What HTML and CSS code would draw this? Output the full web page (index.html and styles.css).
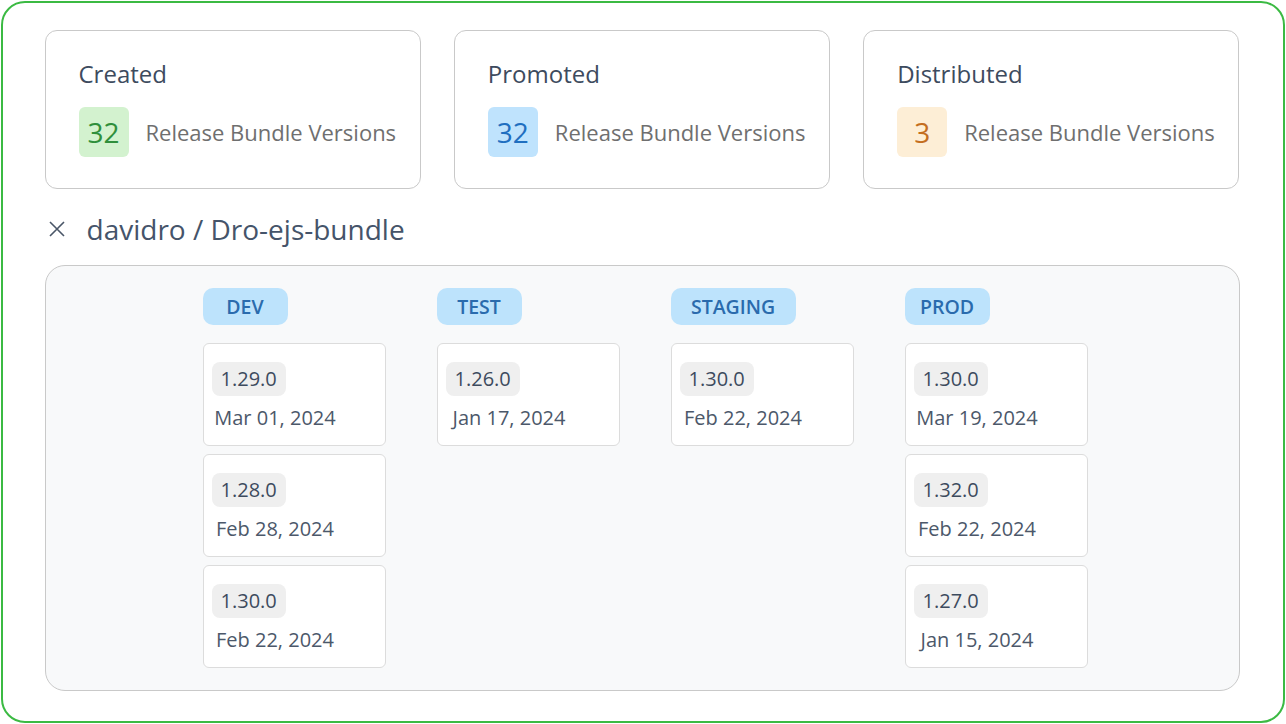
FILE: index.html
```html
<!DOCTYPE html>
<html lang="en">
  <head>
    <meta charset="utf-8" />
    <title>Release Bundles</title>
    <link rel="stylesheet" href="styles.css">
  </head>
  <body>
    <div class="frame">
      <section class="stats">
        <div class="stat-card">
          <h3>Created</h3>
          <div class="stat-row">
            <span class="count green">32</span>
            <span class="label">Release Bundle Versions</span>
          </div>
        </div>
        <div class="stat-card">
          <h3>Promoted</h3>
          <div class="stat-row">
            <span class="count blue">32</span>
            <span class="label">Release Bundle Versions</span>
          </div>
        </div>
        <div class="stat-card">
          <h3>Distributed</h3>
          <div class="stat-row">
            <span class="count orange">3</span>
            <span class="label">Release Bundle Versions</span>
          </div>
        </div>
      </section>

      <div class="bundle-title">
        <svg class="close" width="18" height="18" viewBox="0 0 18 18">
          <path d="M2 2 L16 16 M16 2 L2 16" stroke="#4a5668" stroke-width="1.6" fill="none"/>
        </svg>
        <span>davidro / Dro-ejs-bundle</span>
      </div>

      <section class="pipeline">
        <div class="stage">
          <span class="env">DEV</span>
          <div class="version-card"><span class="ver">1.29.0</span><span class="date">Mar 01, 2024</span></div>
          <div class="version-card"><span class="ver">1.28.0</span><span class="date">Feb 28, 2024</span></div>
          <div class="version-card"><span class="ver">1.30.0</span><span class="date">Feb 22, 2024</span></div>
        </div>
        <div class="stage">
          <span class="env">TEST</span>
          <div class="version-card"><span class="ver">1.26.0</span><span class="date">Jan 17, 2024</span></div>
        </div>
        <div class="stage">
          <span class="env wide">STAGING</span>
          <div class="version-card"><span class="ver">1.30.0</span><span class="date">Feb 22, 2024</span></div>
        </div>
        <div class="stage">
          <span class="env">PROD</span>
          <div class="version-card"><span class="ver">1.30.0</span><span class="date">Mar 19, 2024</span></div>
          <div class="version-card"><span class="ver">1.32.0</span><span class="date">Feb 22, 2024</span></div>
          <div class="version-card"><span class="ver">1.27.0</span><span class="date">Jan 15, 2024</span></div>
        </div>
      </section>
    </div>
  </body>
</html>
```

FILE: styles.css
```css
* {
  margin: 0;
  padding: 0;
  box-sizing: border-box;
}

html, body {
  width: 1286px;
  height: 724px;
  background: #fff;
  font-family: "Open Sans", "Noto Sans", sans-serif;
  color: #3d4b5e;
  overflow: hidden;
}

/* Outer frame */
.frame {
  margin: 1px;
  width: 1284px;
  height: 722px;
  border: 2.5px solid #3bba43;
  border-radius: 24px;
  padding: 26.5px 43.5px 0 41.5px;
}

/* Stat cards */
.stats {
  display: flex;
  gap: 33px;
}

.stat-card {
  width: 377px;
  height: 159px;
  border: 1px solid #c9c9c9;
  border-radius: 12px;
  padding: 27px 0 0 33px;
}

.stat-card h3 {
  font-size: 24px;
  font-weight: 400;
  color: #3d4b5e;
  line-height: 32px;
}

.stat-row {
  display: flex;
  align-items: center;
  gap: 17px;
  margin-top: 17px;
}

.count {
  width: 50px;
  height: 50px;
  border-radius: 6px;
  display: flex;
  align-items: center;
  justify-content: center;
  font-size: 28px;
}

.count.green { background: #d3f2cf; color: #2f8f3b; }
.count.blue { background: #bfe3fd; color: #1f6fc0; }
.count.orange { background: #fdeed6; color: #c46e1f; }

.label {
  font-size: 22px;
  color: #6f6f6f;
}

/* Bundle title */
.bundle-title {
  display: flex;
  align-items: center;
  gap: 21px;
  margin: 21px 0 0 3px;
  height: 38px;
  font-size: 28px;
  color: #45546a;
}

/* Pipeline */
.pipeline {
  margin-top: 17px;
  height: 426px;
  background: #f8f9fa;
  border: 1px solid #c9c9c9;
  border-radius: 20px;
  padding: 22px 0 0 157px;
  display: flex;
  gap: 51px;
}

.stage {
  width: 183px;
  display: flex;
  flex-direction: column;
  align-items: flex-start;
  gap: 8px;
}

.env {
  display: inline-block;
  min-width: 85px;
  height: 37px;
  line-height: 37px;
  padding: 0 15px;
  text-align: center;
  border-radius: 10px;
  background: #bde3fc;
  color: #2a6bad;
  font-size: 19.5px;
  font-weight: 600;
  margin-bottom: 10px;
}

.env.wide {
  min-width: 125px;
}

.version-card {
  width: 183px;
  height: 103px;
  background: #fff;
  border: 1px solid #dcdcdc;
  border-radius: 6px;
  padding: 18px 0 0 8px;
  display: flex;
  flex-direction: column;
  align-items: flex-start;
}

.ver {
  height: 34px;
  line-height: 34px;
  padding: 0 9px;
  background: #efefef;
  border-radius: 8px;
  font-size: 20px;
  color: #3d4b5e;
}

.date {
  width: 127px;
  margin-top: 8px;
  text-align: center;
  font-size: 20px;
  color: #4c586a;
  line-height: 28px;
}
```
